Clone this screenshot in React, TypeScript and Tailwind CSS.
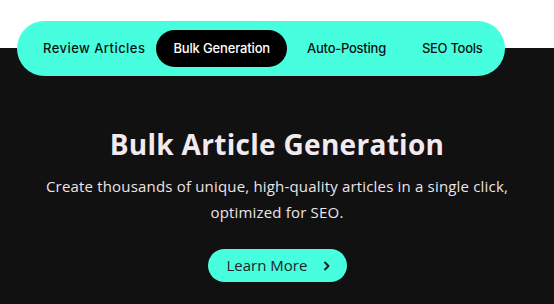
import React from "react";

export default function App() {
  return (
    <div className="min-h-[304px] w-full bg-[linear-gradient(to_bottom,#ffffff_0px,#ffffff_48px,#111111_48px,#111111_100%)] flex flex-col items-center pt-[21px]">
      <nav className="mr-[32px] w-[488px] h-[55px] rounded-full bg-[#47ffdf] flex items-center pl-[26px] font-['Inter',sans-serif] text-[13px] font-medium text-[#111] whitespace-nowrap">
        <span className="shrink-0 tracking-[0.45px]">Review Articles</span>
        <span className="shrink-0 ml-[11px] h-[37px] px-[17px] rounded-full bg-black text-white flex items-center tracking-[-0.15px]">Bulk Generation</span>
        <span className="shrink-0 ml-[20px] tracking-[-0.25px]">Auto-Posting</span>
        <span className="shrink-0 ml-[36px] tracking-[-0.3px]">SEO Tools</span>
      </nav>
      <h1 className="mt-[50px] font-['Open_Sans',sans-serif] font-bold text-[28px] leading-[36px] tracking-[0.3px] text-[#f2eaee] whitespace-nowrap">
        Bulk Article Generation
      </h1>
      <p className="mt-[11px] w-[490px] text-center font-['Open_Sans',sans-serif] text-[15px] leading-[26px] tracking-[0.18px] text-[#ece4e8]">
        Create thousands of unique, high-quality articles in a single click, optimized for SEO.
      </p>
      <button className="mt-[24px] h-[33px] w-[139px] rounded-full bg-[#47ffdf] flex items-center pl-[19px] font-['Open_Sans',sans-serif] text-[15px] text-[#222]">
        <span>Learn More</span>
        <svg className="ml-[16px]" width="8" height="10" viewBox="0 0 8 10" fill="none">
          <path d="M2 1.5L5.5 5L2 8.5" stroke="#222" strokeWidth="2" strokeLinecap="round" strokeLinejoin="round" />
        </svg>
      </button>
    </div>
  );
}
